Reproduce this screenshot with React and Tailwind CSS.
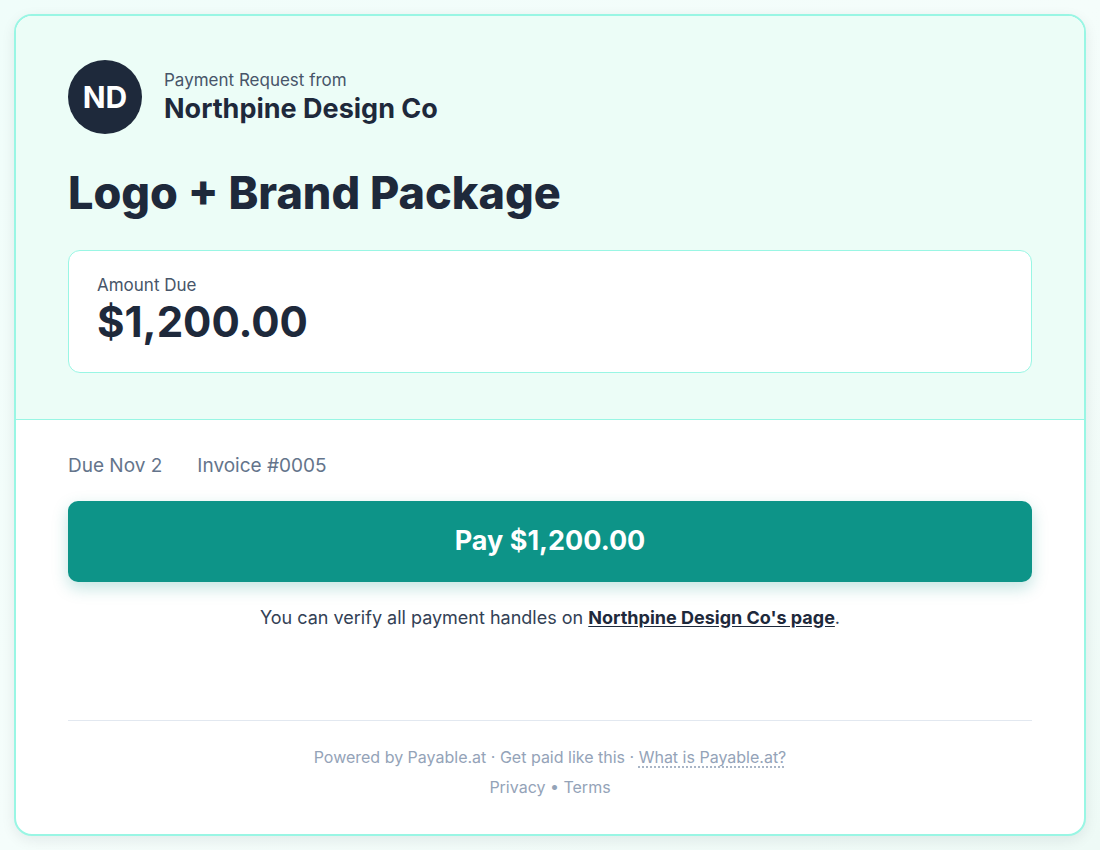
export default function App() {
  return (
    <div
      className="min-h-screen bg-gradient-to-br from-[#f0fdfa] via-[#f5fdfb] to-[#eefaf6] p-[14px]"
      style={{ fontFamily: 'Inter, "Noto Sans", sans-serif' }}
    >
      <div className="overflow-hidden rounded-[18px] border-2 border-[#99f6e4] bg-white shadow-[0_4px_14px_rgba(15,23,42,0.08)]">
        {/* header */}
        <div className="border-b border-[#99f6e4] bg-[#ecfdf7] px-[52px] pt-[44px] pb-[46px]">
          <div className="flex items-center gap-[22px]">
            <div className="flex h-[74px] w-[74px] items-center justify-center rounded-full bg-[#1e293b] text-[30px] font-bold text-white">
              ND
            </div>
            <div className="flex flex-col">
              <span className="text-[17px] leading-[22px] text-[#475569]">Payment Request from</span>
              <span className="mt-[1px] text-[27px] leading-[34px] font-bold text-[#1e293b]">Northpine Design Co</span>
            </div>
          </div>
          <h1 className="mt-[32px] text-[45px] leading-[53px] font-extrabold text-[#1e293b]">
            Logo + Brand Package
          </h1>
          <div className="mt-[31px] rounded-xl border border-[#99f6e4] bg-white px-7 pt-[23px] pb-[25px]">
            <div className="text-[17px] leading-[22px] text-[#475569]">Amount Due</div>
            <div className="mt-[1px] text-[42px] leading-[50px] font-bold text-[#1e293b]">$1,200.00</div>
          </div>
        </div>

        {/* body */}
        <div className="px-[52px] pt-[33px] pb-[36px]">
          <div className="flex gap-[35px] text-[19px] leading-[26px] text-[#64748b]">
            <span>Due Nov 2</span>
            <span>Invoice #0005</span>
          </div>
          <button
            type="button"
            className="mt-[22px] flex h-[81px] w-full items-center justify-center rounded-[10px] bg-[#0d9488] text-[27px] font-bold text-white shadow-[0_6px_16px_rgba(13,148,136,0.25)]"
          >
            Pay $1,200.00
          </button>
          <p className="mt-[23px] text-center text-[18px] leading-[26px] text-[#334155]">
            You can verify all payment handles on{' '}
            <a className="font-bold text-[#1e293b] underline underline-offset-2">Northpine Design Co's page</a>.
          </p>
          <div className="mt-[89px] border-t border-[#e2e8f0]" />
          <div className="mt-[25px] text-center text-[16px] leading-[22px] text-[#94a3b8]">
            Powered by Payable.at · Get paid like this ·{' '}
            <span className="underline decoration-dotted underline-offset-4">What is Payable.at?</span>
          </div>
          <div className="mt-[8px] text-center text-[16px] leading-[22px] text-[#94a3b8]">Privacy • Terms</div>
        </div>
      </div>
    </div>
  );
}
